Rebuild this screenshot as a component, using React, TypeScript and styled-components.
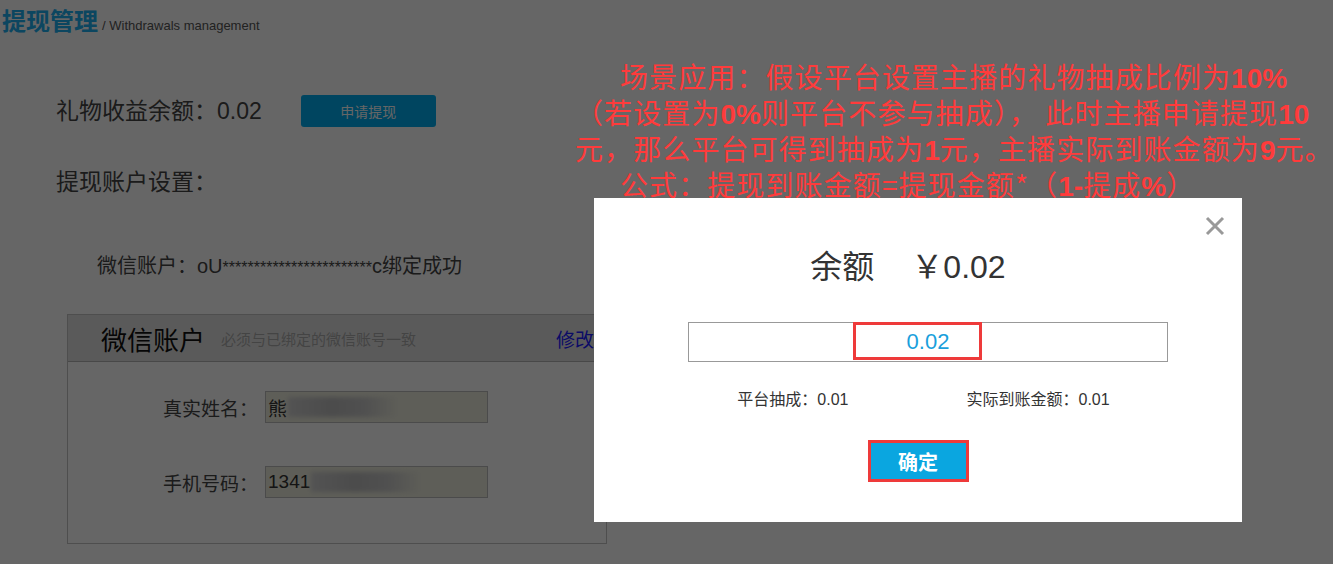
import React from "react";
import styled, { createGlobalStyle } from "styled-components";

const FONT = `"Liberation Sans", "Noto Sans CJK SC", sans-serif`;

const Global = createGlobalStyle`
  html, body { margin: 0; padding: 0; background: #fff; }
  body { font-family: ${FONT}; color: #444; width: 1333px; height: 564px; overflow: hidden; }
  * { box-sizing: border-box; }
`;

const Page = styled.div`
  position: relative;
  width: 1333px;
  height: 564px;
  overflow: hidden;
`;

const Header = styled.div`
  display: flex;
  align-items: baseline;
  padding: 5px 0 0 2px;
  height: 60px;
`;

const Title = styled.h1`
  margin: 0;
  font-size: 24px;
  font-weight: 700;
  color: #20aef0;
  line-height: 34px;
`;

const SubTitle = styled.span`
  margin-left: 4px;
  font-size: 13px;
  color: #555;
`;

const Section = styled.div`
  padding-left: 56px;
`;

const BalanceRow = styled.div`
  display: flex;
  align-items: center;
  height: 32px;
  margin-top: 35px;
`;

const BigText = styled.div`
  font-size: 23px;
  color: #444;
  line-height: 32px;
`;

const ApplyButton = styled.button`
  margin-left: 39px;
  width: 135px;
  height: 32px;
  border: none;
  border-radius: 3px;
  background: #00adf0;
  color: #fff;
  font-family: ${FONT};
  font-size: 14px;
`;

const SettingsLabel = styled(BigText)`
  margin-top: 39px;
`;

const WechatLine = styled.div`
  margin: 52px 0 0 97px;
  font-size: 20px;
  line-height: 32px;
  color: #444;
`;

const Stars = styled.span`
  font-size: 16px;
`;

const Panel = styled.div`
  margin: 30px 0 0 67px;
  width: 540px;
  height: 230px;
  border: 1px solid #c4c4c4;
  display: flex;
  flex-direction: column;
`;

const PanelHeader = styled.div`
  height: 47px;
  background: #e2e2e2;
  border-bottom: 1px solid #b4b4b4;
  display: flex;
  align-items: center;
  padding: 0 12px 0 33px;
`;

const PanelTitle = styled.span`
  font-size: 26px;
  color: #111;
`;

const PanelHint = styled.span`
  margin-left: 16px;
  font-size: 15px;
  color: #aaa;
`;

const PanelLink = styled.a`
  margin-left: auto;
  font-size: 19px;
  color: #2020ff;
  text-decoration: none;
`;

const PanelBody = styled.div`
  display: flex;
  flex-direction: column;
  gap: 43px;
  padding: 29px 0 0 95px;
`;

const FieldRow = styled.div`
  display: flex;
  align-items: center;
`;

const FieldLabel = styled.span`
  font-size: 19px;
  color: #444;
  width: 102px;
`;

const FieldBox = styled.div`
  width: 223px;
  height: 32px;
  border: 1px solid #bcbcbc;
  background: #ebebdc;
  display: flex;
  align-items: center;
  padding-left: 2px;
  font-size: 19px;
  color: #333;
  overflow: hidden;
`;

const Blur = styled.span<{ $w: number }>`
  display: inline-block;
  width: ${(p) => p.$w}px;
  height: 20px;
  margin-left: 1px;
  background: linear-gradient(90deg, #cfcfcf 0%, #bdbdbd 40%, #c8c8c8 70%, rgba(220,220,210,0) 100%);
  filter: blur(2px);
`;

const Overlay = styled.div`
  position: absolute;
  inset: 0;
  background: rgba(0, 0, 0, 0.6);
`;

const Note = styled.div`
  position: absolute;
  left: 575px;
  top: 58px;
  color: #ff3b3b;
  font-family: "Noto Sans CJK SC", sans-serif;
  font-size: 28px;
  letter-spacing: 1.1px;
  white-space: nowrap;
`;

const NoteLine = styled.div<{ $indent: number }>`
  height: 36px;
  line-height: 36px;
  overflow: visible;
  padding-left: ${(p) => p.$indent}px;
`;

const Num = styled.b`
  font-family: "Liberation Sans", sans-serif;
  font-weight: 700;
  letter-spacing: 0;
  line-height: 1;
`;

const Modal = styled.div`
  position: absolute;
  left: 594px;
  top: 198px;
  width: 648px;
  height: 324px;
  background: #fff;
  display: flex;
  flex-direction: column;
  align-items: center;
`;

const Close = styled.button`
  position: absolute;
  right: 16px;
  top: 17px;
  width: 22px;
  height: 22px;
  padding: 0;
  border: none;
  background: none;
  display: flex;
`;

const Amount = styled.div`
  margin: 49px 20px 0 0;
  display: flex;
  gap: 37px;
  font-size: 32px;
  line-height: 40px;
  color: #333;
`;

const AmountInput = styled.div`
  position: relative;
  margin: 35px 0 0 20px;
  width: 480px;
  height: 40px;
  border: 1px solid #999;
  display: flex;
  align-items: center;
  justify-content: center;
  color: #1a9fdc;
  font-size: 22px;
`;

const Highlight = styled.span`
  position: absolute;
  left: 164px;
  top: -1px;
  width: 129px;
  height: 38px;
  border: 3px solid #ee3a3a;
`;

const Fees = styled.div`
  margin: 24px 0 0 11px;
  display: flex;
  gap: 118px;
  font-size: 16px;
  color: #333;
`;

const ConfirmButton = styled.button`
  margin-top: 33px;
  width: 95px;
  height: 36px;
  border: none;
  background: #0aa6e0;
  color: #fff;
  font-family: ${FONT};
  font-size: 20px;
  font-weight: 700;
  outline: 3px solid #ee3a3a;
  outline-offset: 0;
`;

export default function App() {
  return (
    <Page>
      <Global />
      <Header>
        <Title>提现管理</Title>
        <SubTitle>/ Withdrawals management</SubTitle>
      </Header>
      <Section>
        <BalanceRow>
          <BigText>礼物收益余额：0.02</BigText>
          <ApplyButton>申请提现</ApplyButton>
        </BalanceRow>
        <SettingsLabel>提现账户设置：</SettingsLabel>
      </Section>
      <WechatLine>
        微信账户：oU<Stars>************************</Stars>c绑定成功
      </WechatLine>
      <Panel>
        <PanelHeader>
          <PanelTitle>微信账户</PanelTitle>
          <PanelHint>必须与已绑定的微信账号一致</PanelHint>
          <PanelLink href="#">修改</PanelLink>
        </PanelHeader>
        <PanelBody>
          <FieldRow>
            <FieldLabel>真实姓名：</FieldLabel>
            <FieldBox>
              熊<Blur $w={110} />
            </FieldBox>
          </FieldRow>
          <FieldRow>
            <FieldLabel>手机号码：</FieldLabel>
            <FieldBox>
              1341<Blur $w={110} />
            </FieldBox>
          </FieldRow>
        </PanelBody>
      </Panel>

      <Overlay />

      <Note>
        <NoteLine $indent={45}>
          场景应用：假设平台设置主播的礼物抽成比例为<Num>10%</Num>
        </NoteLine>
        <NoteLine $indent={0}>
          （若设置为<Num>0%</Num>则平台不参与抽成），&nbsp;此时主播申请提现<Num>10</Num>
        </NoteLine>
        <NoteLine $indent={0}>
          元，那么平台可得到抽成为<Num>1</Num>元，主播实际到账金额为<Num>9</Num>元。
        </NoteLine>
        <NoteLine $indent={45}>
          公式：提现到账金额=提现金额*（<Num>1-</Num>提成<Num>%</Num>）
        </NoteLine>
      </Note>

      <Modal>
        <Close aria-label="关闭">
          <svg width="22" height="22" viewBox="0 0 22 22">
            <path d="M3 3 L19 19 M19 3 L3 19" stroke="#999" strokeWidth="3" strokeLinecap="butt" />
          </svg>
        </Close>
        <Amount>
          <span>余额</span>
          <span>￥0.02</span>
        </Amount>
        <AmountInput>
          0.02
          <Highlight />
        </AmountInput>
        <Fees>
          <span>平台抽成：0.01</span>
          <span>实际到账金额：0.01</span>
        </Fees>
        <ConfirmButton>确定</ConfirmButton>
      </Modal>
    </Page>
  );
}
